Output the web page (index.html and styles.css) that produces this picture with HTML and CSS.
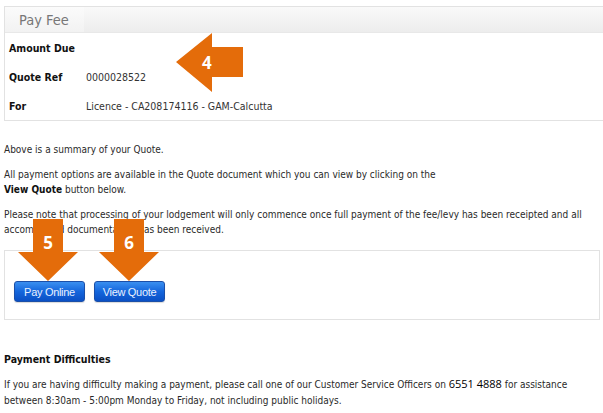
FILE: index.html
```html
<!DOCTYPE html>
<html>
<head>
<meta charset="utf-8">
<link rel="stylesheet" href="styles.css">
</head>
<body>
<div class="page">
  <section class="panel summary">
    <div class="panel-head"><span class="tab">Pay Fee</span></div>
    <table class="details">
      <tr><th>Amount Due</th><td></td></tr>
      <tr><th>Quote Ref</th><td>0000028522</td></tr>
      <tr><th>For</th><td>Licence - CA208174116 - GAM-Calcutta</td></tr>
    </table>
  </section>

  <p class="first">Above is a summary of your Quote.</p>
  <p>All payment options are available in the Quote document which you can view by clicking on the<br><b>View Quote</b> button below.</p>
  <p>Please note that processing of your lodgement will only commence once full payment of the fee/levy has been receipted and all accompanied documentation has been received.</p>

  <section class="panel actions">
    <button class="btn">Pay Online</button>
    <button class="btn">View Quote</button>
  </section>

  <h3 class="sub">Payment Difficulties</h3>
  <p class="help">If you are having difficulty making a payment, please call one of our Customer Service Officers on <span class="phone">6551 4888</span> for assistance between 8:30am - 5:00pm Monday to Friday, not including public holidays.</p>
</div>

<svg class="callout c4" width="70" height="62" viewBox="0 0 70 62">
  <polygon points="0,29 36,0 36,14 67,14 67,44 36,44 36,59" fill="#e46c0a"/>
  <text x="26" y="36" class="num">4</text>
</svg>
<svg class="callout c5" width="62" height="64" viewBox="0 0 62 64">
  <polygon points="15,0 45,0 45,33 60,33 30,62 0,33 15,33" fill="#e46c0a"/>
  <text x="30" y="30" class="num" text-anchor="middle">5</text>
</svg>
<svg class="callout c6" width="62" height="64" viewBox="0 0 62 64">
  <polygon points="15,0 45,0 45,33 60,33 30,62 0,33 15,33" fill="#e46c0a"/>
  <text x="30" y="30" class="num" text-anchor="middle">6</text>
</svg>
</body>
</html>
```

FILE: styles.css
```css
html, body {
  margin: 0;
  padding: 0;
  background: #fff;
  overflow: hidden;
}
body {
  width: 603px;
  height: 413px;
  position: relative;
  font-family: "DejaVu Sans Condensed", "DejaVu Sans", sans-serif;
  font-size: 10px;
  color: #2a2a2a;
}
.page {
  padding: 6px 0 0 4px;
}
.panel {
  border: 1px solid #e2e2e2;
  box-sizing: border-box;
}
.summary {
  margin-right: -20px;
}
.panel-head {
  height: 25px;
  background: linear-gradient(#f9f9f9, #ededed);
  border-bottom: 1px solid #e8e8e8;
  display: flex;
}
.tab {
  display: flex;
  align-items: center;
  white-space: nowrap;
  padding: 0 15px 0 14px;
  background: linear-gradient(#fbfbfb, #f2f2f2);
  font-size: 14.5px;
  color: #777;
}
.details {
  border-collapse: collapse;
  font-size: 10.5px;
}
.details th, .details td {
  height: 29px;
  padding: 0;
  vertical-align: middle;
  text-align: left;
  color: #111;
}
.details th {
  width: 77px;
  padding-left: 4px;
  font-weight: bold;
}
.details td {
  color: #333;
}
p {
  margin: 10px 0 0 0;
  line-height: 15px;
  width: 598px;
}
p.first {
  margin-top: 21px;
}
p b {
  color: #111;
}
.actions {
  margin-top: 13px;
  width: 596px;
  height: 70px;
  padding: 30px 0 0 9px;
  display: flex;
  gap: 9px;
  align-items: flex-start;
}
.btn {
  width: 71px;
  height: 21px;
  border: 1px solid #1b4fa8;
  border-radius: 3px;
  background: linear-gradient(#3a8ff0, #1566dc 50%, #0a4fc4);
  color: #e8f0ff;
  font-family: "Liberation Sans", Arial, sans-serif;
  font-size: 11px;
  padding: 0;
  letter-spacing: -0.3px;
  box-shadow: 0 1px 1px rgba(0,0,0,0.15);
}
.sub {
  margin: 32px 0 0 0;
  font-size: 10.5px;
  line-height: 15px;
  font-weight: bold;
  color: #111;
}
.help {
  margin-top: 10px;
  line-height: 16px;
}
.phone {
  font-family: "Open Sans", "Liberation Sans", sans-serif;
  font-size: 11px;
  line-height: 14px;
  color: #000;
}
.callout {
  position: absolute;
  overflow: visible;
}
.c4 { left: 176px; top: 33px; }
.c5 { left: 18px; top: 219px; }
.c6 { left: 99px; top: 219px; }
.num {
  fill: #fff;
  font-family: "Open Sans", "Liberation Sans", sans-serif;
  font-weight: bold;
  font-size: 17px;
}
```
